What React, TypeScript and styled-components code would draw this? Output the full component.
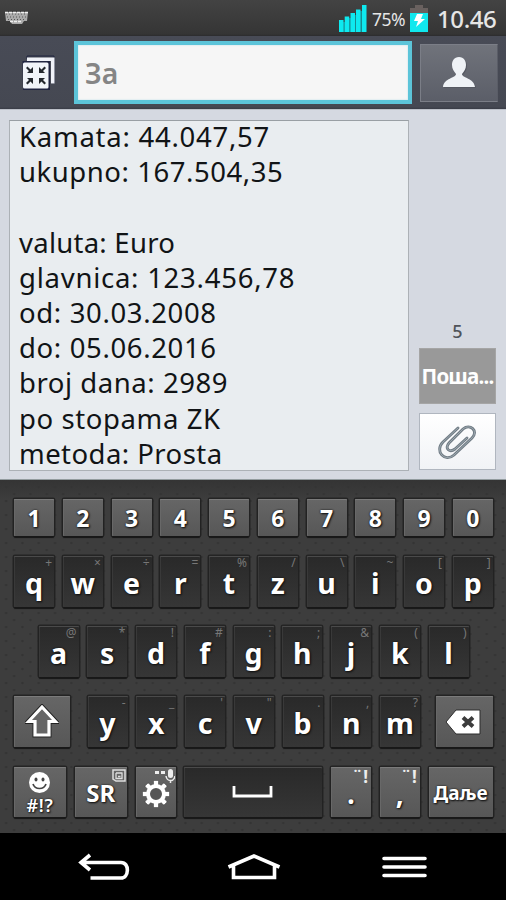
import React from 'react';
import styled, { createGlobalStyle } from 'styled-components';

const GlobalStyle = createGlobalStyle`
  * { box-sizing: border-box; }
  body { margin: 0; background: #000; font-family: 'Noto Sans', 'Open Sans', sans-serif; }
  svg { display: block; flex: none; }
`;

const Screen = styled.main`
  width: 506px;
  height: 900px;
  display: flex;
  flex-direction: column;
  overflow: hidden;
`;

const StatusBar = styled.header`
  height: 36px;
  flex: none;
  display: flex;
  align-items: center;
  padding: 0 9px 0 5px;
  background: linear-gradient(#434343, #353535 94%, #2c2c2e);
  color: #e6e6e6;
`;

const StatusGroup = styled.div`
  margin-left: auto;
  display: flex;
  align-items: center;
`;

const BatteryText = styled.span`
  width: 34px;
  margin: 2px 4px 0 5px;
  font-size: 17.5px;
  line-height: 24px;
  letter-spacing: -0.5px;
  white-space: nowrap;
`;

const Clock = styled.span`
  width: 60px;
  margin: 1px 0 0 9px;
  font-size: 24px;
  line-height: 32px;
  letter-spacing: -0.4px;
  white-space: nowrap;
  font-weight: 500;
`;

const RecipientBar = styled.div`
  height: 73px;
  flex: none;
  display: flex;
  align-items: flex-start;
  padding-top: 5px;
  background: linear-gradient(#484b56, #454852 97%, #393c46);
`;

const ExpandButton = styled.button`
  width: 74px;
  height: 63px;
  padding: 14px 0 0 21px;
  display: flex;
  align-items: flex-start;
  border: 0;
  background: none;
`;

const RecipientField = styled.div`
  width: 338px;
  height: 63px;
  padding-left: 7px;
  border: 4px solid #5cc4d9;
  box-shadow: inset 0 0 2px #b8dde6;
  background: #f6f6f6;
  color: #858585;
  font-size: 28.5px;
  font-weight: 600;
  line-height: 56px;
`;

const ContactButton = styled.button`
  width: 78px;
  height: 58px;
  margin: 3px 0 0 8px;
  padding: 0;
  display: flex;
  justify-content: center;
  border: 1px solid #7b7e87;
  border-right-color: #5a5d67;
  background: linear-gradient(#70737b, #5b5e68);
`;

const Compose = styled.section`
  height: 371px;
  flex: none;
  display: flex;
  padding: 10px 10px 9px 9px;
  gap: 10px;
  background: #d5d9e1;
  border-top: 1px solid #bcc0c8;
  border-bottom: 1px solid #929b9e;
`;

const Message = styled.div`
  width: 400px;
  height: 351px;
  padding-left: 9px;
  border: 1px solid #acb1b6;
  border-top-color: #999fa4;
  background: #e9edf0;
  color: #111416;
  font-size: 27.5px;
`;

const Line = styled.div<{ $track: number }>`
  height: 35.2px;
  line-height: 31px;
  white-space: pre;
  letter-spacing: ${(p) => p.$track}px;
`;

const SideActions = styled.aside`
  width: 77px;
  display: flex;
  flex-direction: column;
  justify-content: flex-end;
`;

const Counter = styled.span`
  color: #50545a;
  text-align: center;
  font-size: 18px;
  font-weight: 500;
  line-height: 24px;
  margin-bottom: 5px;
`;

const SendButton = styled.button`
  height: 56px;
  padding: 0;
  border: 1px solid #a5a5a5;
  background: #999;
  color: #fff;
  font: 700 20.5px/50px 'Noto Sans', sans-serif;
  letter-spacing: -0.8px;
  white-space: nowrap;
`;

const AttachButton = styled.button`
  height: 57px;
  margin-top: 9px;
  padding: 0;
  display: flex;
  align-items: center;
  justify-content: center;
  border: 1px solid #b0b6bf;
  background: linear-gradient(#fff, #f1f3f6);
`;

const Keyboard = styled.section`
  height: 353px;
  flex: none;
  padding-left: 14px;
  background-color: #3c3c3c;
  background-image:
    radial-gradient(circle, #343434 0.8px, transparent 1.6px),
    radial-gradient(circle, #343434 0.8px, transparent 1.6px),
    linear-gradient(#343434, #3d3d3d 20px);
  background-size: 16.3px 14px, 16.3px 14px, auto;
  background-position: -2px 0, 6px 7px, 0 0;
  padding-top: 19px;
`;

const KeyRow = styled.div<{ $indent?: number; $height: number }>`
  display: flex;
  height: ${(p) => p.$height}px;
  padding-left: ${(p) => p.$indent ?? 0}px;
  gap: 8.75px;
`;

const Key = styled.button<{ $w?: number; $h?: number; $light?: boolean; $before?: number }>`
  position: relative;
  flex: none;
  width: ${(p) => p.$w ?? 40}px;
  height: ${(p) => p.$h ?? 51}px;
  margin-left: ${(p) => p.$before ?? 0}px;
  padding: 0;
  display: flex;
  justify-content: center;
  border: 0;
  border-radius: 1px;
  color: #fff;
  text-shadow: 0 0 2px #111, 1px 1px 2px #111;
  background: ${(p) => (p.$light ? 'linear-gradient(#666, #575757)' : 'linear-gradient(#292929, #363636)')};
  box-shadow:
    inset 0 1px 0 ${(p) => (p.$light ? '#7b7b7b' : '#4a4a4a')},
    inset 1px 0 0 ${(p) => (p.$light ? '#686868' : '#393939')},
    0 2px 1px #181818,
    0 0 0 1.5px #242424;
`;

const Glyph = styled.span<{ $size: number; $line: number }>`
  font-family: 'Noto Sans', sans-serif;
  font-weight: 700;
  font-size: ${(p) => p.$size}px;
  line-height: ${(p) => p.$line}px;
  white-space: nowrap;
`;

const Hint = styled.span<{ $bright?: boolean }>`
  position: absolute;
  right: 2px;
  top: ${(p) => (p.$bright ? 1 : 0)}px;
  color: ${(p) => (p.$bright ? '#ededed' : '#777')};
  font: ${(p) => (p.$bright ? '700 17px/17px' : '400 12px/14px')} 'Noto Sans', sans-serif;
  letter-spacing: ${(p) => (p.$bright ? 1 : 0)}px;
  text-shadow: none;
`;

const SmileyKeyContent = styled.span`
  display: flex;
  flex-direction: column;
  align-items: center;
  padding-top: 5px;
  font: 600 18px/18px 'Noto Sans', sans-serif;
  letter-spacing: 0.7px;
  gap: 3px;
`;

const KeyArt = styled.span<{ $top: number; $shift?: number }>`
  padding-top: ${(p) => p.$top}px;
  margin-right: ${(p) => p.$shift ?? 0}px;
`;

const CornerArt = styled.span`
  position: absolute;
  top: 2px;
  right: 1px;
`;

const NavBar = styled.nav`
  height: 67px;
  flex: none;
  display: flex;
  padding: 20px 0 0 78px;
  background: #000;
`;

const NavButton = styled.button<{ $w: number; $gap?: number }>`
  width: ${(p) => p.$w}px;
  height: 30px;
  margin-left: ${(p) => p.$gap ?? 0}px;
  padding: 0;
  border: 0;
  background: none;
`;

const LINES: [string, number][] = [
  ['Kamata: 44.047,57', 0.75],
  ['ukupno: 167.504,35', 0.55],
  ['', 0],
  ['valuta: Euro', 0.25],
  ['glavnica: 123.456,78', 0.75],
  ['od: 30.03.2008', 0.65],
  ['do: 05.06.2016', 0.65],
  ['broj dana: 2989', 0.55],
  ['po stopama ZK', 0.6],
  ['metoda: Prosta', 0.45],
];

const TOP_ROW: [string, string][] = [['q', '+'], ['w', '×'], ['e', '÷'], ['r', '='], ['t', '%'], ['z', '/'], ['u', '\\'], ['i', '~'], ['o', '['], ['p', ']']];
const HOME_ROW: [string, string][] = [['a', '@'], ['s', '*'], ['d', '!'], ['f', '#'], ['g', ':'], ['h', ';'], ['j', '&'], ['k', '('], ['l', ')']];
const LOW_ROW: [string, string][] = [['y', '-'], ['x', '_'], ['c', "'"], ['v', '"'], ['b', '.'], ['n', ','], ['m', '?']];

const LetterKey = ({ label, hint, before }: { label: string; hint: string; before?: number }) => (
  <Key $before={before}>
    <Hint>{hint}</Hint>
    <Glyph $size={28.5} $line={54}>{label}</Glyph>
  </Key>
);

const KeyboardIcon = () => (
  <svg width="23" height="14" viewBox="0 0 23 14">
    <path d="M0 1h23l-1 9h-3l-2 3H7l-2-3H1z" fill="#aaa" />
    <path d="M1 3h21M2 6h19M3 8.500h17" stroke="#555" strokeWidth="1" strokeDasharray="1 2" />
    <path d="M0 1.500h23M5 10.500h12" stroke="#eee" strokeWidth="1.500" strokeDasharray="3 1" />
  </svg>
);

const SignalIcon = () => (
  <svg width="29" height="28" viewBox="0 0 29 28">
    <path d="M5 18h2v10H5zM11 14h2v14h-2zM16.500 11h2v17h-2zM22 7h2.500v21H22z" fill="#168b91" />
    <path d="M1 16h4.500v12H1zM6.700 12.500h4.500V28H6.700zM12.500 9h4.500v19h-4.500zM18 5.500h4.500V28H18zM24 1h4.500v27H24z" fill="#0ee9ef" />
  </svg>
);

const BatteryIcon = () => (
  <svg width="18" height="28" viewBox="0 0 18 28">
    <path d="M5 1h8v3h5v5H0V4h5z" fill="#69615f" />
    <path d="M0 9h18v19H0z" fill="#10e8ee" />
    <path d="M7 10h6l-2 5h4L6 23l2-6H4z" fill="#fff" />
  </svg>
);

const ExpandIcon = () => (
  <svg width="36" height="36" viewBox="0 0 36 36">
    <path d="M6 4V1h27v27h-3" fill="none" stroke="#202440" strokeWidth="1" />
    <path d="M6 2.500h27.500v26h-3.500V6H6z" fill="#f0f2f8" />
    <path d="M1.500 6H29v29H2z" fill="#202440" />
    <rect x="2" y="7.500" width="25.500" height="26" rx="1.500" fill="#f1f4f9" />
    <path d="M12 12v6H6l2-2-3-3 1.500-1.500 3 3zM18 12v6h6l-2-2 3-3-1.500-1.500-3 3zM12 29v-6H6l2 2-3 3 1.500 1.500 3-3zM18 29v-6h6l-2 2 3 3-1.500 1.500-3-3z" fill="#24282e" />
  </svg>
);

const PersonIcon = () => (
  <svg width="36" height="45" viewBox="0 0 36 45">
    <path d="M18 12c-5 0-7 4-7 8 0 4 2 6 4 9 0 4-12 4-13 13h32c-1-9-13-9-13-13 2-3 4-5 4-9 0-4-2-8-7-8z" transform="translate(1 1)" fill="#565962" />
    <path d="M18 12c-5 0-7 4-7 8 0 4 2 6 4 9 0 4-12 4-13 13h32c-1-9-13-9-13-13 2-3 4-5 4-9 0-4-2-8-7-8z" fill="#eff2f6" />
  </svg>
);

const ClipIcon = () => (
  <svg width="40" height="36" viewBox="0 0 40 36" fill="none" strokeLinecap="round">
    <path d="M20 4L5 18c-9 9 2 21 11 13L34 14c7-7-2-15-9-9L11 19c-5 6 1 10 6 6l12-11" stroke="#717c85" strokeWidth="2.900" />
    <path d="M20 4L5 18c-9 9 2 21 11 13L34 14c7-7-2-15-9-9L11 19c-5 6 1 10 6 6l12-11" stroke="#aebac0" strokeWidth=".7" />
  </svg>
);

const ShiftIcon = () => (
  <svg width="34" height="34" viewBox="0 0 34 34">
    <path d="M17 3L3.500 17.500H10V31h14V17.500h6.500z" fill="#666" stroke="#222" strokeWidth="5" />
    <path d="M17 3L3.500 17.500H10V31h14V17.500h6.500z" fill="#666" stroke="#fff" strokeWidth="3.200" />
  </svg>
);

const DeleteIcon = () => (
  <svg width="36" height="26" viewBox="0 0 36 26">
    <path d="M1 13L11 1h24v24H11z" fill="#fff" stroke="#2d2d2d" />
    <path d="M18 8.500l10 9M28 8.500l-10 9" stroke="#3c3c3c" strokeWidth="4" />
  </svg>
);

const SmileyIcon = () => (
  <svg width="21" height="21" viewBox="0 0 21 21">
    <circle cx="10.500" cy="10.500" r="10.500" fill="#fff" />
    <ellipse cx="7" cy="7.500" rx="1.500" ry="2" fill="#444" />
    <ellipse cx="14" cy="7.500" rx="1.500" ry="2" fill="#444" />
    <path d="M4 12c2 6 11 6 13 0" fill="none" stroke="#444" strokeWidth="1.700" />
  </svg>
);

const GearIcon = () => (
  <svg width="28" height="28" viewBox="-14 -14 28 28">
    <g fill="#fff" stroke="#333" strokeWidth=".5">
      {[0, 45, 90, 135, 180, 225, 270, 315].map((angle) => (
        <rect key={angle} x="-2.500" y="-13.500" width="5" height="7" rx="1" transform={`rotate(${angle})`} />
      ))}
    </g>
    <circle r="8" fill="#555" stroke="#fff" strokeWidth="4" />
  </svg>
);

const LayersIcon = () => (
  <svg width="14" height="14" viewBox="0 0 14 14" fill="none" stroke="#ddd">
    <path d="M1 1h12v11H4L1 10z" strokeWidth="1.500" />
    <path d="M4 4h6.500M4 4v5.500h6V4M6 7.500h2.500" strokeWidth="1.300" />
  </svg>
);

const MicIcon = () => (
  <svg width="21" height="15" viewBox="0 0 21 15" fill="#eee">
    <path d="M1 2h4v3H1zM7 2h4v3H7z" />
    <rect x="14" y="0" width="5" height="9" rx="2.500" />
    <path d="M12 7c1 6 8 6 9 0M16.500 11v3" fill="none" stroke="#eee" strokeWidth="1.500" />
  </svg>
);

const SpaceIcon = () => (
  <svg width="42" height="14" viewBox="0 0 42 14" fill="none">
    <path d="M2 0v10h37V0" stroke="#fff" strokeWidth="2.800" />
  </svg>
);

export default function App() {
  return (
    <>
      <GlobalStyle />
      <Screen>
        <StatusBar>
          <KeyboardIcon />
          <StatusGroup>
            <SignalIcon />
            <BatteryText>75%</BatteryText>
            <BatteryIcon />
            <Clock>10.46</Clock>
          </StatusGroup>
        </StatusBar>
        <RecipientBar>
          <ExpandButton aria-label="Collapse"><ExpandIcon /></ExpandButton>
          <RecipientField>За</RecipientField>
          <ContactButton aria-label="Contacts"><PersonIcon /></ContactButton>
        </RecipientBar>
        <Compose>
          <Message>
            {LINES.map(([text, track], i) => <Line key={i} $track={track}>{text}</Line>)}
          </Message>
          <SideActions>
            <Counter>5</Counter>
            <SendButton>Поша...</SendButton>
            <AttachButton aria-label="Attach"><ClipIcon /></AttachButton>
          </SideActions>
        </Compose>
        <Keyboard>
          <KeyRow $height={57}>
            {[...'1234567890'].map((n) => (
              <Key key={n} $h={37} $light><Glyph $size={23} $line={39}>{n}</Glyph></Key>
            ))}
          </KeyRow>
          <KeyRow $height={70}>
            {TOP_ROW.map(([label, hint]) => <LetterKey key={label} label={label} hint={hint} />)}
          </KeyRow>
          <KeyRow $height={70} $indent={24.5}>
            {HOME_ROW.map(([label, hint]) => <LetterKey key={label} label={label} hint={hint} />)}
          </KeyRow>
          <KeyRow $height={71}>
            <Key $w={56} $light aria-label="Shift"><KeyArt $top={8}><ShiftIcon /></KeyArt></Key>
            {LOW_ROW.map(([label, hint], i) => (
              <LetterKey key={label} label={label} hint={hint} before={i === 0 ? 8.75 : 0} />
            ))}
            <Key $w={57} $light $before={7.5} aria-label="Delete"><KeyArt $top={13} $shift={3}><DeleteIcon /></KeyArt></Key>
          </KeyRow>
          <KeyRow $height={66}>
            <Key $w={52} $h={50} $light><SmileyKeyContent><SmileyIcon />#!?</SmileyKeyContent></Key>
            <Key $w={52} $h={50} $light><CornerArt><LayersIcon /></CornerArt><Glyph $size={24} $line={52}>SR</Glyph></Key>
            <Key $h={50} $light aria-label="Settings"><CornerArt><MicIcon /></CornerArt><KeyArt $top={13}><GearIcon /></KeyArt></Key>
            <Key $w={138} $h={50} aria-label="Space"><KeyArt $top={19}><SpaceIcon /></KeyArt></Key>
            <Key $h={50} $light><Hint $bright>¨!</Hint><Glyph $size={28} $line={53}>.</Glyph></Key>
            <Key $h={50} $light><Hint $bright>¨!</Hint><Glyph $size={28} $line={53}>,</Glyph></Key>
            <Key $w={64} $h={50} $light><Glyph $size={19} $line={52}>Даље</Glyph></Key>
          </KeyRow>
        </Keyboard>
        <NavBar>
          <NavButton $w={52} aria-label="Back">
            <svg width="52" height="30" viewBox="0 0 52 30" fill="none" stroke="#fff" strokeWidth="3.600">
              <path d="M12 2L3 9.500l9 7.500M4 9.500h39c9 0 8 15.500 0 15.500H12.500" />
            </svg>
          </NavButton>
          <NavButton $w={54} $gap={97} aria-label="Home">
            <svg width="54" height="30" viewBox="0 0 54 30" fill="none" stroke="#fff" strokeWidth="3.600">
              <path d="M1.500 14L27 3l25.500 11M6.500 13v11.500h41V13" />
            </svg>
          </NavButton>
          <NavButton $w={45} $gap={101} aria-label="Menu">
            <svg width="45" height="30" viewBox="0 0 45 30" stroke="#fff" strokeWidth="3.600" strokeLinecap="round">
              <path d="M2 5.500h41M2 14h41M2 22.500h41" />
            </svg>
          </NavButton>
        </NavBar>
      </Screen>
    </>
  );
}
